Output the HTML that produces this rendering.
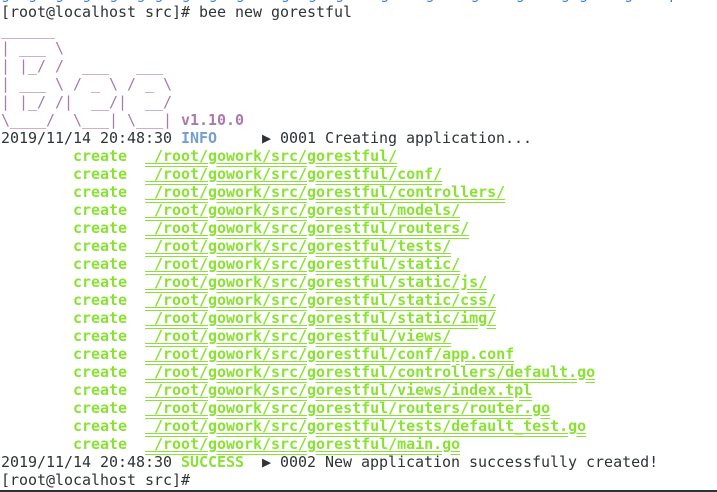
<!DOCTYPE html>
<html><head><meta charset="utf-8"><style>
html,body{margin:0;padding:0;width:717px;height:492px;overflow:hidden;background:#fff;position:relative;}
pre{margin:0;position:absolute;left:1px;top:3px;font-family:"DejaVu Sans Mono","Liberation Mono",monospace;font-size:15px;line-height:18px;color:#2e3436;letter-spacing:-0.03px;}
.p{color:#a97ba8}
.g{color:#8ae234;font-weight:bold}
.u{color:#8ae234;font-weight:bold;text-decoration:underline double;text-underline-offset:2px}
.b{color:#729fcf;font-weight:bold}
.top{position:absolute;left:1px;top:-15px;width:716px;overflow:hidden;font-family:"DejaVu Sans Mono",monospace;font-size:15px;color:#3b7ee0;margin:0;white-space:pre}
.bar{position:absolute;left:0;top:490px;width:717px;height:2px;background:#2e3436}
</style></head><body>
<div class="top">g  g  g  g  g  g g  g  g  g    g  g  g    g    g    g    g    g g    g    p         g    g    p</div>
<pre>[root@localhost src]# bee new gorestful
<span class="p">______
| ___ \
| |_/ /  ___   ___
| ___ \ / _ \ / _ \
| |_/ /|  __/|  __/
\____/  \___| \___| <b>v1.10.0</b></span>
2019/11/14 20:48:30 <span class="b">INFO</span>     ▶ 0001 Creating application...
        <span class="g">create</span>  <span class="u"> /root/gowork/src/gorestful/</span>
        <span class="g">create</span>  <span class="u"> /root/gowork/src/gorestful/conf/</span>
        <span class="g">create</span>  <span class="u"> /root/gowork/src/gorestful/controllers/</span>
        <span class="g">create</span>  <span class="u"> /root/gowork/src/gorestful/models/</span>
        <span class="g">create</span>  <span class="u"> /root/gowork/src/gorestful/routers/</span>
        <span class="g">create</span>  <span class="u"> /root/gowork/src/gorestful/tests/</span>
        <span class="g">create</span>  <span class="u"> /root/gowork/src/gorestful/static/</span>
        <span class="g">create</span>  <span class="u"> /root/gowork/src/gorestful/static/js/</span>
        <span class="g">create</span>  <span class="u"> /root/gowork/src/gorestful/static/css/</span>
        <span class="g">create</span>  <span class="u"> /root/gowork/src/gorestful/static/img/</span>
        <span class="g">create</span>  <span class="u"> /root/gowork/src/gorestful/views/</span>
        <span class="g">create</span>  <span class="u"> /root/gowork/src/gorestful/conf/app.conf</span>
        <span class="g">create</span>  <span class="u"> /root/gowork/src/gorestful/controllers/default.go</span>
        <span class="g">create</span>  <span class="u"> /root/gowork/src/gorestful/views/index.tpl</span>
        <span class="g">create</span>  <span class="u"> /root/gowork/src/gorestful/routers/router.go</span>
        <span class="g">create</span>  <span class="u"> /root/gowork/src/gorestful/tests/default_test.go</span>
        <span class="g">create</span>  <span class="u"> /root/gowork/src/gorestful/main.go</span>
2019/11/14 20:48:30 <span class="g">SUCCESS</span>  ▶ 0002 New application successfully created!
[root@localhost src]#</pre>
<div class="bar"></div>
</body></html>
